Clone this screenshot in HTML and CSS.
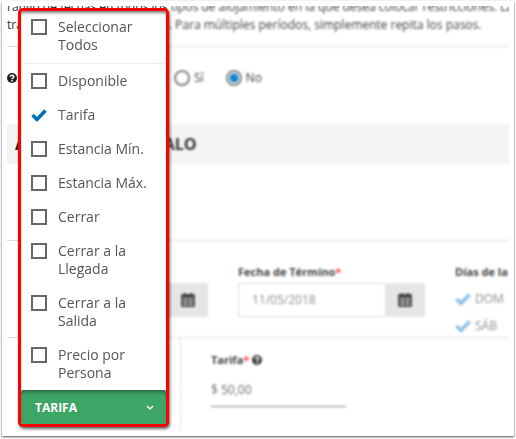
FILE: index.html
```html
<!DOCTYPE html>
<html lang="es">
<head>
    <meta charset="UTF-8">
    <meta name="viewport" content="width=device-width, initial-scale=1.0">
    <title>Intervalo</title>
    <link rel="stylesheet" href="styles.css">
</head>
<body>
    <svg class="symbols" aria-hidden="true">
        <symbol id="calendar" viewBox="0 0 14 14">
            <path fill="currentColor" d="M3 0h2v1h4V0h2v1h2l1 1v11l-1 1H1l-1-1V2l1-1h2z"/>
            <path stroke="#bbb" d="M1 5.500h12M1 8.500h12M1 11.500h12M4.500 5v8M9.500 5v8"/>
        </symbol>
        <symbol id="check" viewBox="0 0 16 14">
            <path fill="none" stroke="currentColor" stroke-width="3.500" d="M1.500 7l4.500 4.500L14.500 2.500"/>
        </symbol>
        <symbol id="help" viewBox="0 0 10 10">
            <circle cx="5" cy="5" r="5" fill="currentColor"/>
            <path fill="none" stroke="#fff" stroke-width="1.500" d="M3.200 3.800C3.400 1.700 6.800 1.700 6.800 3.700C6.800 4.800 5 4.800 5 6.200M5 7v1.400"/>
        </symbol>
    </svg>

    <main class="window">
        <div class="content">
            <p class="intro">rango de fechas en todos los tipos de alojamiento en la que desea colocar restricciones. La<br>
            travesías de cada temporada. Para múltiples períodos, simplemente repita los pasos.</p>

            <div class="option-row">
                <svg class="help"><use href="#help"/></svg>
                <div class="radios">
                    <label><input type="radio" name="option" value="si">Sí</label>
                    <label><input type="radio" name="option" value="no" checked>No</label>
                </div>
            </div>

            <h2>AÑADIR AL INTERVALO</h2>

            <div class="dates">
                <div class="field">
                    <label for="start">Fecha de Inicio<em>*</em></label>
                    <div class="date-box">
                        <input type="text" id="start" value="11/05/2018">
                        <button type="button" aria-label="Calendario"><svg><use href="#calendar"/></svg></button>
                    </div>
                </div>
                <div class="field">
                    <label for="end">Fecha de Término<em>*</em></label>
                    <div class="date-box">
                        <input type="text" id="end" value="11/05/2018">
                        <button type="button" aria-label="Calendario"><svg><use href="#calendar"/></svg></button>
                    </div>
                </div>
                <div class="field days">
                    <strong>Días de la semana</strong>
                    <label><input type="checkbox" checked><svg><use href="#check"/></svg>DOM</label>
                    <label><input type="checkbox" checked><svg><use href="#check"/></svg>SÁB</label>
                </div>
            </div>

            <div class="rates">
                <div class="rate">
                    <label for="rate">Tarifa<em>*</em> <svg class="help"><use href="#help"/></svg></label>
                    <input type="text" id="rate" value="$ 50,00">
                </div>
            </div>
            <div class="veil"></div>
        </div>

        <div class="menu">
            <ul>
                <li class="all"><label><input type="checkbox"><span>Seleccionar Todos</span></label></li>
                <li><label><input type="checkbox"><span>Disponible</span></label></li>
                <li><label><input type="checkbox" checked><svg><use href="#check"/></svg><span>Tarifa</span></label></li>
                <li><label><input type="checkbox"><span>Estancia Mín.</span></label></li>
                <li><label><input type="checkbox"><span>Estancia Máx.</span></label></li>
                <li><label><input type="checkbox"><span>Cerrar</span></label></li>
                <li><label><input type="checkbox"><span>Cerrar a la Llegada</span></label></li>
                <li><label><input type="checkbox"><span>Cerrar a la Salida</span></label></li>
                <li><label><input type="checkbox"><span>Precio por Persona</span></label></li>
            </ul>
            <button type="button" class="menu-btn">
                TARIFA
                <svg viewBox="0 0 8 6"><path fill="none" stroke="#fff" stroke-width="1.500" d="M1 1l3 3 3-3"/></svg>
            </button>
        </div>
    </main>
</body>
</html>
```
FILE: styles.css
```css
*{
    box-sizing: border-box;
}
body{
    margin: 0;
    padding: 1px 2px 3px;
    background: #fff;
    font: 12px/16px "Open Sans", sans-serif;
    color: #333;
}
ul{
    list-style: none;
    margin: 0;
    padding: 0;
}
input, button{
    margin: 0;
    font: inherit;
    color: inherit;
}
em{
    color: #f33;
    font-style: normal;
}
.symbols{
    display: none;
}

.window{
    position: relative;
    padding: 5px;
    background: #fff;
    box-shadow: 0 1px 2px rgba(0, 0, 0, .7);
}
.content{
    position: relative;
    overflow: hidden;
}
.intro{
    margin: -8px 0 0;
    padding-bottom: 12px;
    border-bottom: 1px solid #ddd;
    font-size: 12px;
    line-height: 18px;
    white-space: nowrap;
}

.option-row{
    display: flex;
    align-items: center;
    height: 62px;
}
.help{
    width: 10px;
    height: 10px;
    color: #222;
}
.radios{
    display: flex;
    gap: 22px;
    margin-left: 157px;
}
.radios label{
    display: flex;
    align-items: center;
    gap: 4px;
    font-size: 12px;
}
.radios input{
    appearance: none;
    width: 16px;
    height: 16px;
    border: 2px solid #777;
    border-radius: 50%;
}
.radios input:checked{
    background: radial-gradient(#0078c8 4px, #fff 5px);
}

h2{
    margin: 15px 0 76px;
    padding: 0 8px;
    background: #f3f3f3;
    font-size: 16px;
    line-height: 40px;
    color: #222;
}

.dates{
    display: grid;
    grid-template-columns: 187px 187px 1fr;
    gap: 30px;
    height: 97px;
    padding: 23px 0 0 14px;
    border-top: 1px solid #ddd;
}
.field > label, .field > strong, .rate label{
    display: block;
    font-size: 11px;
    font-weight: bold;
    white-space: nowrap;
}
.date-box{
    display: flex;
    height: 34px;
    margin-top: 3px;
}
.date-box input{
    flex: 1;
    min-width: 0;
    padding: 0 13px;
    border: 1px solid #ddd;
    border-right: 0;
    color: #888;
}
.date-box button{
    width: 40px;
    padding: 0;
    border: 0;
    background: #e3e3e3;
}
.date-box svg{
    display: block;
    width: 14px;
    height: 14px;
    margin: auto;
}
.days label{
    display: flex;
    align-items: center;
    gap: 4px;
    margin-top: 11px;
    font-weight: normal;
    font-size: 12px;
    color: #888;
}
.days input{
    position: absolute;
    opacity: 0;
}
.days svg{
    width: 16px;
    height: 14px;
    color: #7fbce6;
}

.rates{
    padding-left: 173px;
    border-top: 1px solid #ddd;
}
.rate{
    height: 93px;
    padding: 14px 0 0 30px;
    border-left: 1px solid #ddd;
}
.rate .help{
    vertical-align: -1px;
}
.rate input{
    width: 135px;
    height: 30px;
    margin-top: 9px;
    padding: 0 0 4px;
    border: 0;
    border-bottom: 1px solid #777;
    color: #666;
}

/* everything right of the menu is out of focus */
.veil{
    position: absolute;
    inset: 0 0 0 161px;
    background: rgba(255, 255, 255, .1);
    backdrop-filter: blur(1px);
}

.menu{
    position: absolute;
    top: 7px;
    left: 16px;
    width: 151px;
    border: 3px solid #f00;
    border-radius: 5px;
    background: #fff;
    box-shadow: 1px 2px 3px rgba(0, 0, 0, .6), inset 0 3px 3px -1px rgba(0, 0, 0, .5);
    font-size: 14px;
    line-height: 18px;
    color: #555;
}
.menu li{
    padding: 8px 10px;
}
.menu .all{
    padding-bottom: 9px;
    padding-top: 7px;
    border-bottom: 1px solid #eee;
}
.menu label{
    position: relative;
    display: flex;
    gap: 11px;
}
.menu input{
    appearance: none;
    flex: none;
    width: 16px;
    height: 16px;
    margin-top: 1px;
    border: 2px solid #666;
}
.menu input:checked{
    border-color: transparent;
}
.menu label svg{
    position: absolute;
    top: 2px;
    left: 0;
    width: 16px;
    height: 14px;
    color: #0071bc;
}
.menu-btn{
    display: flex;
    align-items: center;
    justify-content: space-between;
    width: 100%;
    height: 34px;
    padding: 2px 12px 0 14px;
    border: 0;
    border-radius: 2px;
    background: #3da566;
    box-shadow: inset 0 4px 4px -2px rgba(0, 0, 0, .4);
    font-size: 12px;
    font-weight: bold;
    color: #fff;
}
.menu-btn svg{
    width: 8px;
    height: 6px;
}
```
